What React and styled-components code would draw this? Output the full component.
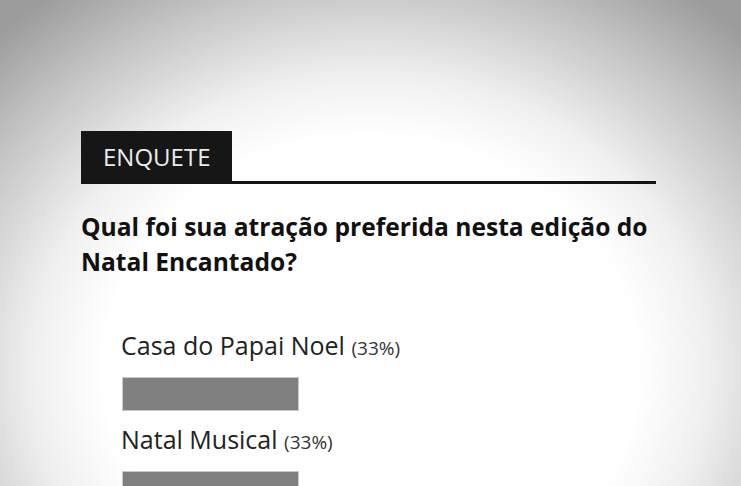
import styled, { createGlobalStyle } from "styled-components";

const GlobalStyle = createGlobalStyle`
  html, body {
    margin: 0;
    padding: 0;
  }
  body {
    font-family: "Open Sans", "Noto Sans", sans-serif;
    height: 486px;
    overflow: hidden;
    background: radial-gradient(ellipse 72% 96% at 50% 76%, #ffffff 50%, #f0f0f0 63%, #c2c2c2 84%, #9c9c9c 100%);
  }
`;

const Page = styled.div`
  padding: 131px 85px 0 81px;
`;

const Header = styled.div`
  display: flex;
  border-bottom: 3px solid #141414;
`;

const HeaderTab = styled.div`
  background: #161616;
  color: #ececec;
  width: 151px;
  height: 50px;
  box-sizing: border-box;
  padding-left: 22px;
  font-size: 24px;
  line-height: 52px;
`;

const Question = styled.h3`
  margin: 25px -4px 0 0;
  font-size: 24.6px;
  font-weight: 700;
  line-height: 35px;
  color: #111;
`;

const Options = styled.div`
  margin-top: 51px;
  padding-left: 40px;
`;

const OptionLabel = styled.div`
  font-size: 25px;
  line-height: 30px;
  color: #222;
`;

const Percent = styled.span`
  font-size: 19px;
  line-height: 20px;
  color: #333;
`;

const Bar = styled.div`
  margin: 17px 0 13px 1px;
  width: ${(p) => p.$width}px;
  height: 34px;
  box-sizing: border-box;
  background: #808080;
  border: 1px solid #c9c9c9;
`;

const options = [
  { nome: "Casa do Papai Noel", pct: 33 },
  { nome: "Natal Musical", pct: 33 },
];

export default function App() {
  return (
    <>
      <GlobalStyle />
      <Page>
        <Header>
          <HeaderTab>ENQUETE</HeaderTab>
        </Header>
        <Question>Qual foi sua atração preferida nesta edição do Natal Encantado?</Question>
        <Options>
          {options.map((o) => (
            <div key={o.nome}>
              <OptionLabel>
                {o.nome} <Percent>({o.pct}%)</Percent>
              </OptionLabel>
              <Bar $width={177} />
            </div>
          ))}
        </Options>
      </Page>
    </>
  );
}
